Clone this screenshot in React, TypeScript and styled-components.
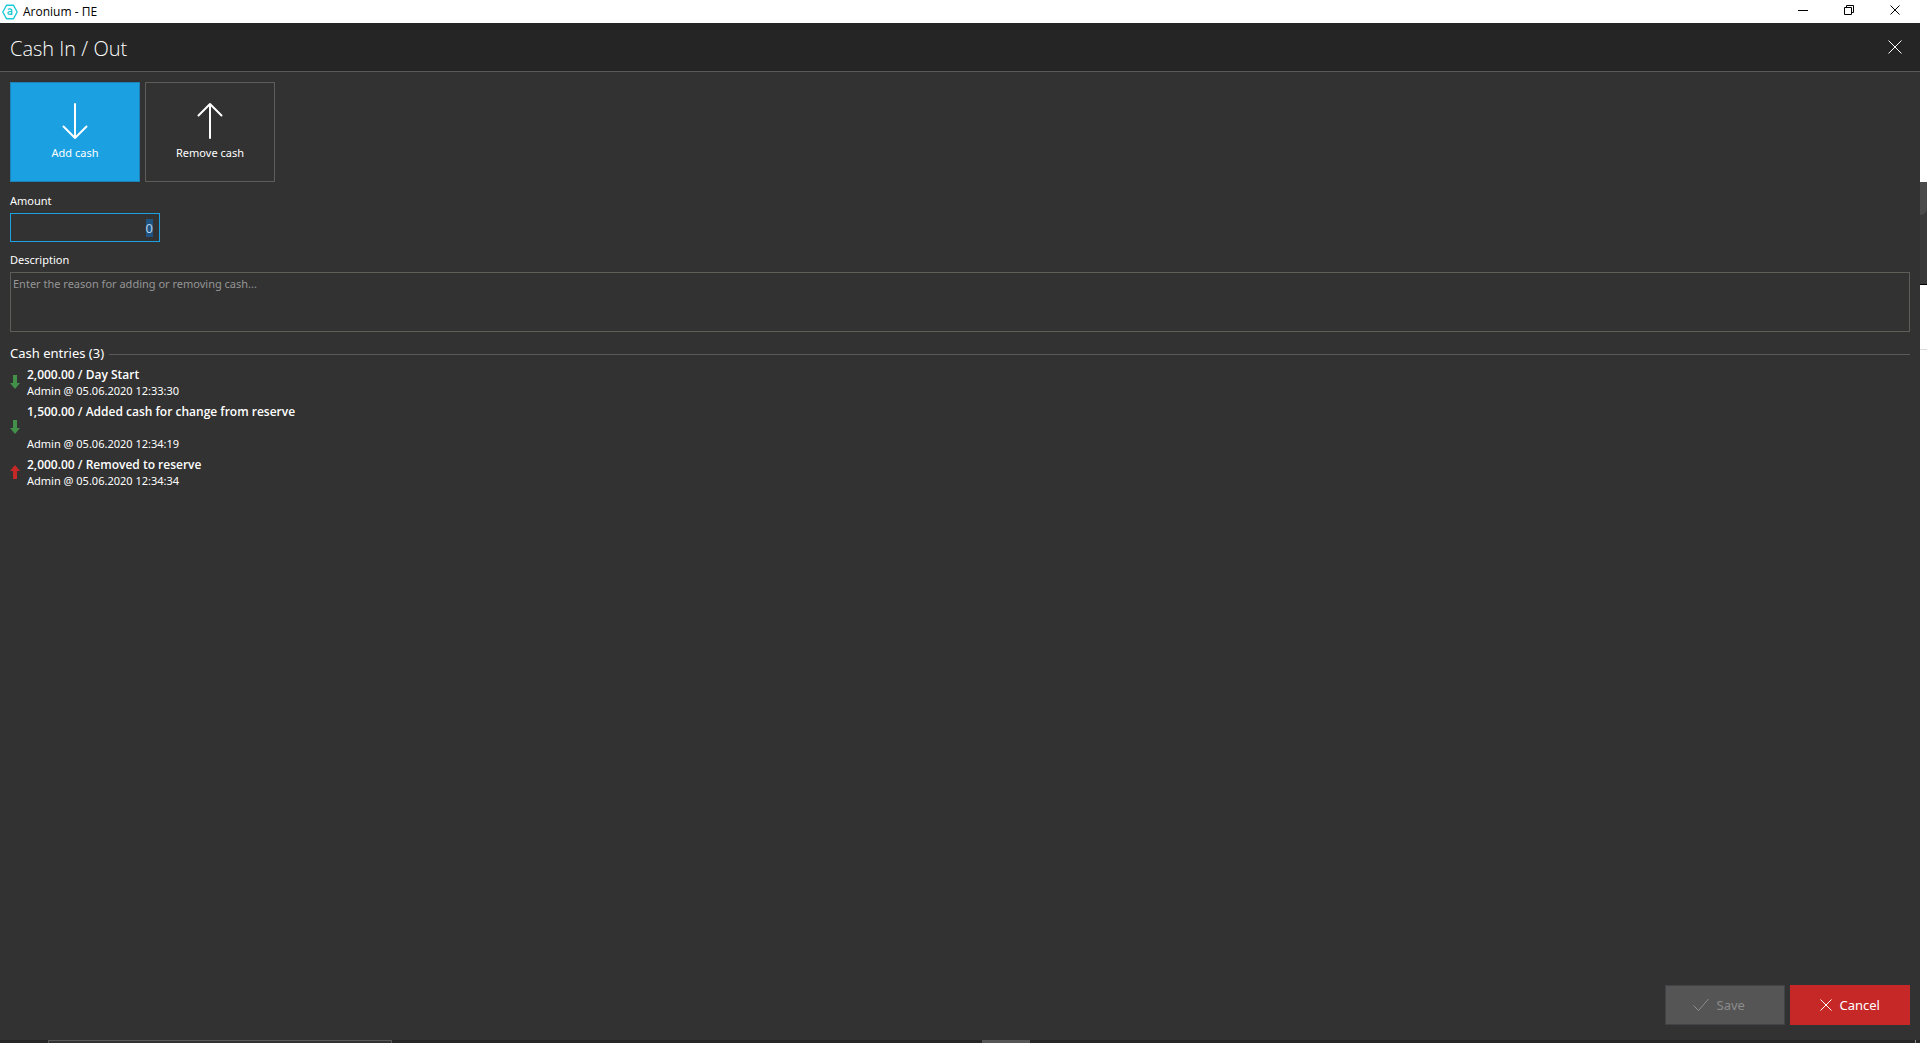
import React, { useState } from "react";
import styled, { createGlobalStyle } from "styled-components";

const GlobalStyle = createGlobalStyle`
  * { box-sizing: border-box; }
  body {
    margin: 0;
    background: #ffffff;
    color: #ffffff;
    font-family: "Noto Sans", "Open Sans", sans-serif;
    font-size: 11px;
    line-height: 16px;
  }
  button, input, textarea { font: inherit; color: inherit; margin: 0; }
`;

const Screen = styled.div`
  display: flex;
  flex-direction: column;
  min-height: 100vh;
`;

const TitleBar = styled.header`
  display: flex;
  align-items: flex-start;
  justify-content: space-between;
  height: 23px;
  padding: 0 9px 0 2px;
  background: #ffffff;
  color: #000000;
`;

const AppName = styled.div`
  display: flex;
  align-items: center;
  gap: 5px;
  height: 23px;
  font-family: "Open Sans", "Noto Sans", sans-serif;
  font-size: 12px;
`;

const WindowControls = styled.div`
  display: flex;
  height: 20px;
`;

const WindowButton = styled.button`
  display: flex;
  align-items: center;
  justify-content: center;
  width: 46px;
  padding: 0;
  border: 0;
  background: transparent;
`;

const Workspace = styled.div`
  display: flex;
  flex: 1;
`;

const Panel = styled.div`
  display: flex;
  flex: 1;
  flex-direction: column;
  background: #323232;
`;

const PanelHeader = styled.div`
  display: flex;
  align-items: center;
  justify-content: space-between;
  height: 49px;
  padding: 0 10px;
  background: #252525;
  border-bottom: 1px solid #5a5a5a;
`;

const PanelTitle = styled.h1`
  margin: 0;
  padding-top: 3px;
  font-family: "Open Sans", "Noto Sans", sans-serif;
  font-size: 20px;
  line-height: 28px;
  font-weight: 300;
`;

const CloseButton = styled.button`
  display: flex;
  align-items: center;
  justify-content: center;
  width: 30px;
  height: 30px;
  padding: 0;
  border: 0;
  background: transparent;
`;

const Content = styled.main`
  display: flex;
  flex: 1;
  flex-direction: column;
  padding: 10px;
`;

const ModeRow = styled.div`
  display: flex;
  gap: 5px;
  margin-bottom: 1px;
`;

const ModeButton = styled.button<{ $active: boolean }>`
  display: flex;
  flex-direction: column;
  align-items: center;
  justify-content: center;
  gap: 5px;
  width: 130px;
  height: 100px;
  padding: 0 0 2px;
  border: 1px solid ${(p) => (p.$active ? "#1c81b4" : "#5c5c58")};
  background: ${(p) => (p.$active ? "#1ba1e2" : "transparent")};
`;

const Label = styled.label`
  margin: 10px 0 4px;
`;

const AmountInput = styled.input`
  width: 150px;
  height: 29px;
  padding: 0 6px;
  border: 1px solid #1ba1e2;
  outline: 0;
  background: transparent;
  font-size: 13px;
  text-align: right;
  &::selection { background: #1f5482; color: #b4cfe6; }
`;

const DescriptionInput = styled.textarea`
  display: block;
  width: 100%;
  height: 60px;
  padding: 3px 2px;
  border: 1px solid #5c5f58;
  outline: 0;
  resize: none;
  background: transparent;
  &::placeholder { color: #959595; opacity: 1; }
`;

const SectionTitle = styled.h2`
  display: flex;
  align-items: center;
  gap: 5px;
  margin: 12px 0 4px;
  font-size: 13px;
  line-height: 19px;
  font-weight: 400;
  &::after {
    content: "";
    flex: 1;
    height: 1px;
    margin-top: 2px;
    background: #5a5a5a;
  }
`;

const EntryList = styled.ul`
  display: flex;
  flex-direction: column;
  gap: 5px;
  margin: 0;
  padding: 0;
  list-style: none;
`;

const EntryRow = styled.li`
  display: flex;
  align-items: center;
  gap: 7px;
`;

const EntryText = styled.div`
  white-space: pre-line;
`;

const EntryName = styled.strong`
  font-family: "Open Sans", "Noto Sans", sans-serif;
  font-size: 12px;
  font-weight: 600;
  line-height: 16px;
  vertical-align: top;
`;

const Footer = styled.footer`
  display: flex;
  justify-content: flex-end;
  gap: 5px;
  padding: 0 10px 15px;
`;

const ActionButton = styled.button<{ $danger?: boolean }>`
  display: flex;
  align-items: center;
  justify-content: center;
  gap: 8px;
  width: 120px;
  height: 40px;
  padding: 0;
  border: 1px solid ${(p) => (p.$danger ? "#c62828" : "#414346")};
  background: ${(p) => (p.$danger ? "#c62828" : "#555555")};
  color: ${(p) => (p.$danger ? "#ffffff" : "#8c8c8c")};
  font-size: 13px;
`;

const ActionLabel = styled.span`
  min-width: 41px;
  text-align: left;
`;

const Taskbar = styled.div`
  display: flex;
  height: 3px;
  padding: 0 4px 0 48px;
  background: #272626;
`;

const TaskSearch = styled.div`
  width: 344px;
  border: 1px solid #5a5a5a;
  border-bottom: 0;
  background: #323131;
`;

const TaskItem = styled.div`
  width: 48px;
  margin-left: 590px;
  background: #565656;
`;

const TaskEdge = styled.div`
  width: 1px;
  margin-left: auto;
  background: #8a8a8a;
`;

const Backdrop = styled.div`
  width: 7px;
  padding-top: 159px;
  background: #ffffff;
`;

const BackdropTab = styled.div`
  height: 103px;
  border-bottom: 1px solid #000000;
  background: #3a3a3a;
  &::before {
    content: "";
    display: block;
    height: 33px;
    border-bottom-right-radius: 7px;
    background: #4b4b4b;
  }
`;

const BackdropLine = styled.div`
  height: 1px;
  margin-top: 64px;
  background: #dcdcdc;
`;

function Logo() {
  return (
    <svg width="16" height="16" viewBox="0 0 16 16" fill="none" stroke="#1fcbd8" aria-hidden="true">
      <path d="M4.6 1.2h6.8L15.2 8l-3.8 6.8H4.6L.8 8z" strokeWidth="1.4" strokeLinejoin="round" />
      <path d="M5.8 5.4c1.4-.8 4-.7 4 1.2v4.4M9.8 7.7H7.6c-2.2 0-2.2 2.7 0 2.7 1.2 0 2.2-.6 2.2-1.4" strokeWidth="1.3" />
    </svg>
  );
}

function LargeArrow({ up }: { up?: boolean }) {
  return (
    <svg width="26" height="38" viewBox="0 0 26 38" fill="none" stroke="#ffffff" strokeWidth="2" strokeLinecap="round" strokeLinejoin="round" aria-hidden="true">
      <path d={up ? "M13 36V2M1.5 13.5 13 2l11.5 11.5" : "M13 2v34M1.5 24.5 13 36l11.5-11.5"} />
    </svg>
  );
}

function EntryArrow({ up }: { up?: boolean }) {
  return (
    <svg width="10" height="16" viewBox="0 0 10 16" fill={up ? "#c62828" : "#43904a"} aria-hidden="true">
      <path d={up ? "M5 0l5 6H7v8H3V6H0z" : "M3 0h4v8h3l-5 6-5-6h3z"} />
    </svg>
  );
}

function Cross({ size, width = 1 }: { size: number; width?: number }) {
  return (
    <svg width={size} height={size} viewBox={`0 0 ${size} ${size}`} fill="none" stroke="currentColor" strokeWidth={width} aria-hidden="true">
      <path d={`M.5.5l${size - 1} ${size - 1}M${size - 0.5}.5L.5 ${size - 0.5}`} />
    </svg>
  );
}

const entries = [
  { id: 1, text: "2,000.00 / Day Start", meta: "Admin @ 05.06.2020 12:33:30", removed: false },
  { id: 2, text: "1,500.00 / Added cash for change from reserve\n", meta: "Admin @ 05.06.2020 12:34:19", removed: false },
  { id: 3, text: "2,000.00 / Removed to reserve", meta: "Admin @ 05.06.2020 12:34:34", removed: true },
];

export default function App() {
  const [mode, setMode] = useState<"add" | "remove">("add");
  const [amount, setAmount] = useState("0");

  return (
    <Screen>
      <GlobalStyle />
      <TitleBar>
        <AppName>
          <Logo />
          <span>Aronium - ПЕ</span>
        </AppName>
        <WindowControls>
          <WindowButton aria-label="Minimize">
            <svg width="10" height="10" aria-hidden="true"><path d="M0 5.5h10" stroke="#000" /></svg>
          </WindowButton>
          <WindowButton aria-label="Restore">
            <svg width="10" height="10" fill="none" stroke="#000" aria-hidden="true">
              <path d="M.5 2.5h7v7h-7zM2.5 2.5v-2h7v7h-2" />
            </svg>
          </WindowButton>
          <WindowButton aria-label="Close window"><Cross size={10} /></WindowButton>
        </WindowControls>
      </TitleBar>
      <Workspace>
        <Panel>
          <PanelHeader>
            <PanelTitle>Cash In / Out</PanelTitle>
            <CloseButton aria-label="Close"><Cross size={14} /></CloseButton>
          </PanelHeader>
          <Content>
            <ModeRow>
              <ModeButton $active={mode === "add"} onClick={() => setMode("add")}>
                <LargeArrow />
                Add cash
              </ModeButton>
              <ModeButton $active={mode === "remove"} onClick={() => setMode("remove")}>
                <LargeArrow up />
                Remove cash
              </ModeButton>
            </ModeRow>
            <Label htmlFor="amount">Amount</Label>
            <AmountInput
              id="amount"
              value={amount}
              autoFocus
              onFocus={(e) => e.target.select()}
              onChange={(e) => setAmount(e.target.value)}
            />
            <Label htmlFor="description">Description</Label>
            <DescriptionInput id="description" placeholder="Enter the reason for adding or removing cash..." />
            <SectionTitle>Cash entries ({entries.length})</SectionTitle>
            <EntryList>
              {entries.map((entry) => (
                <EntryRow key={entry.id}>
                  <EntryArrow up={entry.removed} />
                  <EntryText>
                    <EntryName>{entry.text}</EntryName>
                    {"\n"}
                    {entry.meta}
                  </EntryText>
                </EntryRow>
              ))}
            </EntryList>
          </Content>
          <Footer>
            <ActionButton disabled>
              <svg width="16" height="14" viewBox="0 0 16 14" fill="none" stroke="currentColor" aria-hidden="true">
                <path d="M.5 7.5l5 5L15.5 1" />
              </svg>
              <ActionLabel>Save</ActionLabel>
            </ActionButton>
            <ActionButton $danger>
              <Cross size={12} />
              <ActionLabel>Cancel</ActionLabel>
            </ActionButton>
          </Footer>
          <Taskbar>
            <TaskSearch />
            <TaskItem />
            <TaskEdge />
          </Taskbar>
        </Panel>
        <Backdrop>
          <BackdropTab />
          <BackdropLine />
        </Backdrop>
      </Workspace>
    </Screen>
  );
}
